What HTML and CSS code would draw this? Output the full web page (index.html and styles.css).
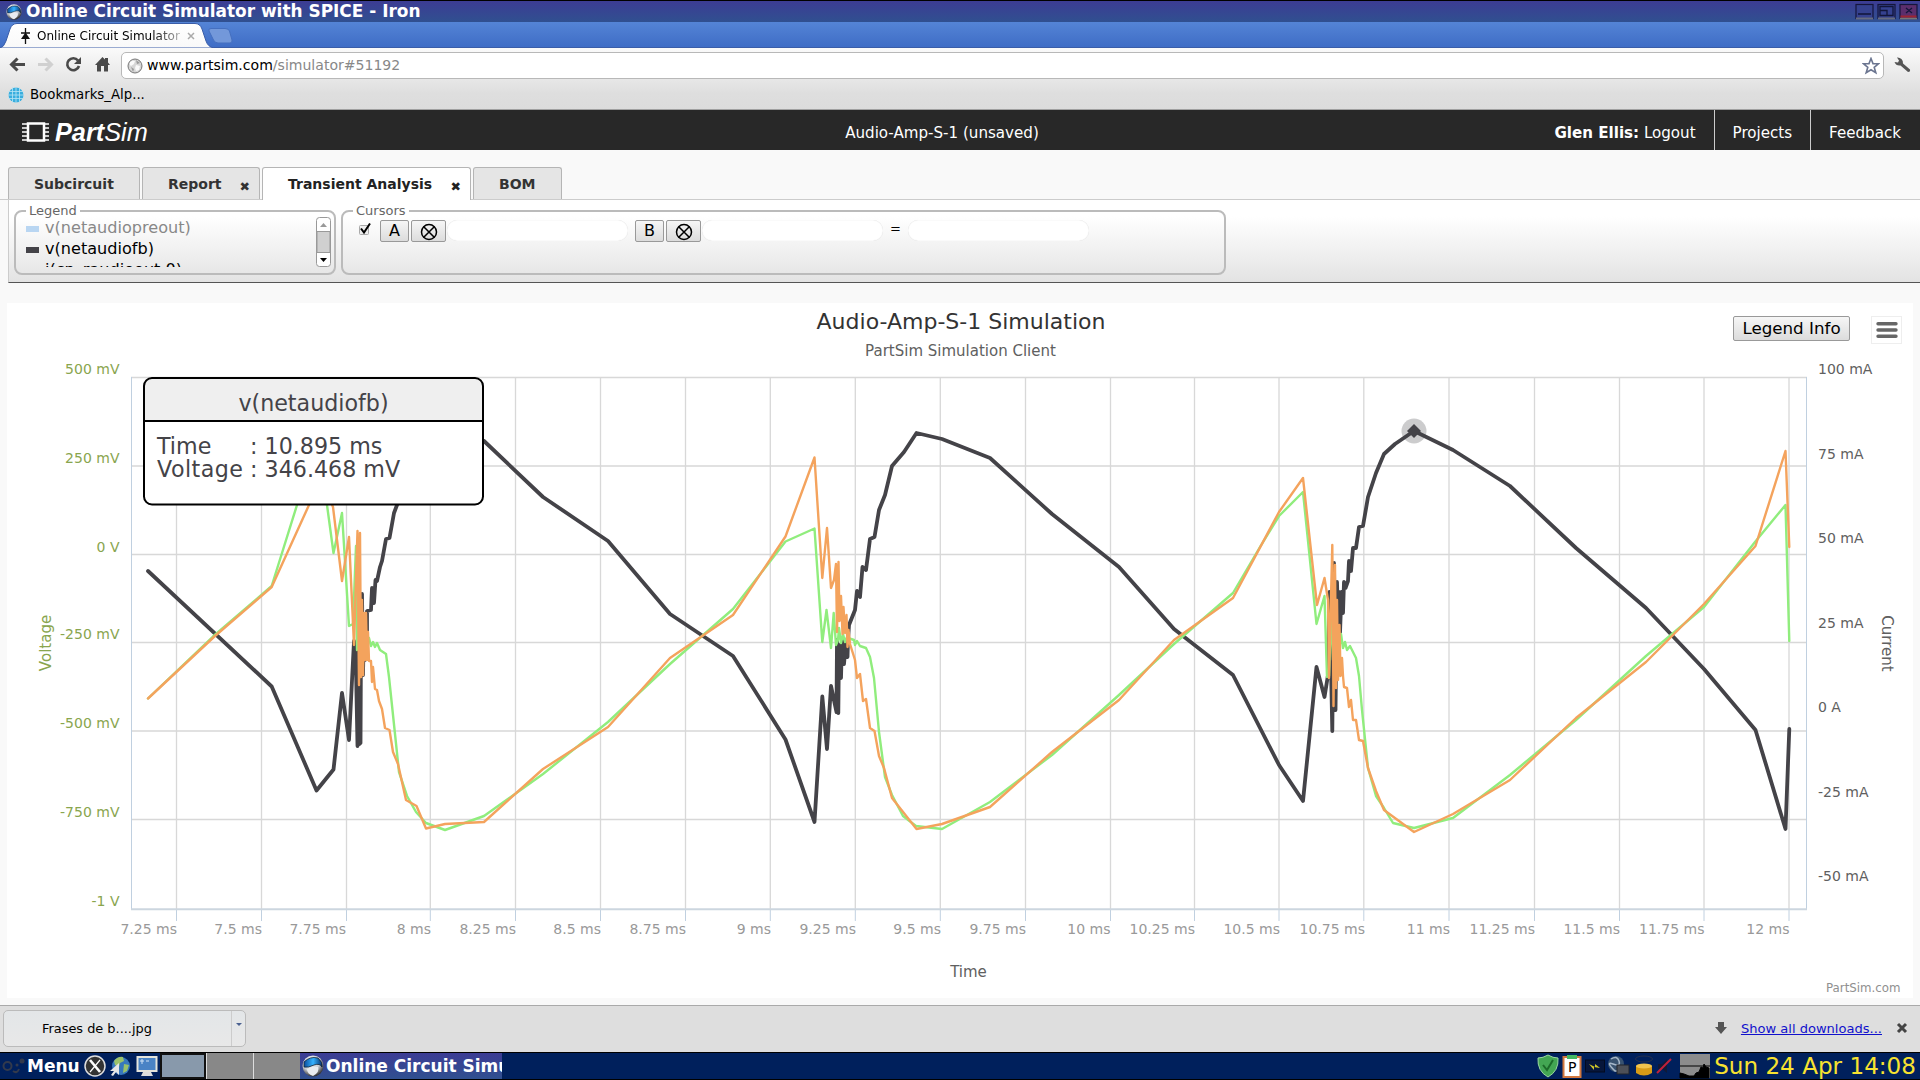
FILE: index.html
```html
<!DOCTYPE html>
<html lang="en">
<head>
    <meta charset="utf-8">
    <title>Online Circuit Simulator with SPICE</title>
    <link rel="stylesheet" href="styles.css">
</head>
<body>
    <svg class="defs" width="0" height="0">
        <defs>
            <radialGradient id="ballShade" cx=".4" cy=".3" r=".7">
                <stop offset="0" stop-color="#fff"/>
                <stop offset=".6" stop-color="#c8ccd2"/>
                <stop offset="1" stop-color="#333"/>
            </radialGradient>
            <linearGradient id="visor" x1="0" y1="0" x2="1" y2="0">
                <stop offset="0" stop-color="#0a4c9c"/>
                <stop offset=".5" stop-color="#35b2ff"/>
                <stop offset="1" stop-color="#06326e"/>
            </linearGradient>
            <symbol id="ironBall" viewBox="0 0 22 22">
                <circle cx="11" cy="11" r="10.5" fill="url(#ballShade)"/>
                <path d="M2 7Q8 1 16 3Q21 7 20 12Q18 8 12 10Q6 13 2 12Z" fill="url(#visor)" stroke="#123" stroke-width=".8"/>
                <path d="M5 14Q9 11 16 12Q18 17 11 21Q5 19 5 14Z" fill="#e9ecf0"/>
            </symbol>
        </defs>
    </svg>

    <!-- Window title -->
    <div class="titlebar">
        <svg class="ball" width="16" height="16"><use href="#ironBall"/></svg>
        <span class="window-title">Online Circuit Simulator with SPICE - Iron</span>
        <svg class="window-buttons" width="64" height="18" viewBox="0 0 64 18">
            <g fill="#35418f" stroke="#15153c" stroke-width="1.2">
                <rect x="1" y="1.5" width="17" height="14"/>
                <rect x="23" y="1.5" width="17" height="14"/>
                <rect x="45" y="1.5" width="17" height="14" fill="#5b2e6c"/>
            </g>
            <path d="M1 15.5h17M23 15.5h17" stroke="#666b80" stroke-width="2"/>
            <path d="M45.5 13.5h16" stroke="#9c2432" stroke-width="2"/>
            <path d="M45 15.6h17" stroke="#777" stroke-width="1.6"/>
            <path d="M3 11h13M25 3.5h13v9H25zM25 7.500h7v5M51 5l6 5M57 5l-6 5" stroke="#11153a" stroke-width="1.3" fill="none"/>
        </svg>
    </div>

    <!-- Browser tab strip -->
    <div class="tabstrip">
        <svg class="tab-shape" width="240" height="26" viewBox="0 0 240 26">
            <defs>
                <linearGradient id="tabFill" x1="0" y1="0" x2="0" y2="1">
                    <stop offset="0" stop-color="#fff"/>
                    <stop offset="1" stop-color="#f9f9f9"/>
                </linearGradient>
            </defs>
            <path d="M0 26Q4 25 6 19L10 7Q12 1.500 17 1.500H195Q200 1.500 202 7L206 19Q208 25 214 26Z" fill="url(#tabFill)" stroke="#3a5da8"/>
            <path d="M213 6.500H225Q228.500 6.500 229.500 9L232 18Q232.500 21 230 21H218Q215 21 213.500 18L209 9Q208 6.500 211 6.500Z" fill="#7398da" stroke="#456fbf"/>
            <path d="M25.500 6V22M21 11h9" stroke="#111" stroke-width="1.300"/>
            <path d="M25.500 10.500l4.500 6.500h-9z" fill="#111"/>
            <path d="M188 11l6 6M194 11l-6 6" stroke="#aaa" stroke-width="1.500"/>
        </svg>
        <span class="browser-tab-title">Online Circuit Simulator</span>
    </div>

    <!-- Navigation toolbar -->
    <div class="toolbar">
        <div class="nav-row">
            <svg width="121" height="28" viewBox="0 0 121 28">
                <path d="M25 14.500H12M17.500 8.500L11.500 14.500L17.500 20.500" fill="none" stroke="#4a4a4a" stroke-width="3"/>
                <path d="M38 14.500H51M45.500 8.500L51.500 14.500L45.500 20.500" fill="none" stroke="#d0d0d0" stroke-width="3"/>
                <path d="M78 10.500A6 6 0 1 0 79 16" fill="none" stroke="#4a4a4a" stroke-width="2.600"/>
                <path d="M81 7v7h-7z" fill="#4a4a4a"/>
                <path d="M95 15L102.500 7L105 9.500V8h3v4.500L110 15h-2v6.500h-4V16h-3v5.500h-4V15z" fill="#4a4a4a"/>
            </svg>
            <div class="address">
                <svg width="16" height="16" viewBox="0 0 16 16">
                    <circle cx="8" cy="8" r="7" fill="#d6d6d6" stroke="#777"/>
                    <path d="M3 4Q6 2 8 3L7 6L4 8L3 7ZM9 7l4 1l-1 4l-3 1l-1-3z" fill="#fafafa"/>
                    <path d="M9 2l4 3l-3 1zM4 9l3 2l-1 3z" fill="#999"/>
                </svg>
                <span class="url">www.partsim.com<span>/simulator#51192</span></span>
                <svg class="star" width="18" height="18" viewBox="0 0 18 18">
                    <path d="M9 1.500l2 5.100l5.500.2l-4.300 3.500l1.600 5.400L9 12.700l-4.800 3l1.600-5.400L1.500 6.800L7 6.600z" fill="#fff" stroke="#6b7590" stroke-width="1.600"/>
                </svg>
            </div>
            <svg width="35" height="28" viewBox="0 0 35 28">
                <path d="M12 7.500A5.500 5.500 0 0 1 18 13.500L25 19.500Q25.500 22 23 22L15.500 15.500A5.500 5.500 0 0 1 9.500 12L13 12.500L14 10.500Z" fill="#555"/>
            </svg>
        </div>
        <div class="bookmarks">
            <svg width="16" height="16" viewBox="0 0 16 16">
                <circle cx="8" cy="8" r="7.500" fill="#39aede"/>
                <path d="M0 4.500h16M0 8h16M0 11.500h16M4.500 0v16M8 0v16M11.500 0v16" stroke="#b9e4f5" stroke-width=".8"/>
            </svg>
            <span>Bookmarks_Alp...</span>
        </div>
    </div>

    <!-- PartSim header -->
    <div class="site-header">
        <div class="logo">
            <svg width="28" height="20" viewBox="0 0 28 20">
                <rect x="6" y="1.500" width="16" height="17" fill="none" stroke="#fff" stroke-width="2.500"/>
                <path d="M0 2h6M0 6h6M0 10h6M0 14h6M0 18h6M22 2h5M22 6h5M22 10h5M22 14h5M22 18h5" stroke="#fff" stroke-width="1.700"/>
            </svg>
            <span class="logo-text"><b>Part</b>Sim</span>
        </div>
        <div class="project-name">Audio-Amp-S-1 (unsaved)</div>
        <div class="links">
            <span><b>Glen Ellis:</b> Logout</span>
            <span>Projects</span>
            <span>Feedback</span>
        </div>
    </div>

    <div class="tabs">
        <div class="tab subcircuit">Subcircuit</div>
        <div class="tab report">Report <i class="close"></i></div>
        <div class="tab analysis active">Transient Analysis <i class="close"></i></div>
        <div class="tab bom">BOM</div>
    </div>

    <div class="controls">
        <fieldset class="legend-box">
            <legend>Legend</legend>
            <div class="series-list">
                <ul>
                    <li class="off"><i></i>v(netaudiopreout)</li>
                    <li><i></i>v(netaudiofb)</li>
                    <li><i class="none"></i>i(cp_raudioout.0)</li>
                </ul>
                <div class="scrollbar">
                    <svg width="15" height="50" viewBox="0 0 15 50">
                        <rect x=".5" y=".5" width="14" height="49" rx="3" fill="#fff" stroke="#999"/>
                        <rect x="1" y="14.500" width="13" height="21" fill="#d0d0d0" stroke="#999"/>
                        <path d="M4 10h7l-3.500-4z" fill="#999"/>
                        <path d="M4 41h7l-3.500 4z" fill="#000"/>
                    </svg>
                </div>
            </div>
        </fieldset>
        <fieldset class="cursors-box">
            <legend>Cursors</legend>
            <div class="cursor-row">
                <svg class="check" width="14" height="14" viewBox="0 0 14 14">
                    <rect x=".500" y="3.500" width="9" height="9" rx="1" fill="#eee" stroke="#aaa"/>
                    <path d="M2 6.500l3 4l6-9" fill="none" stroke="#000" stroke-width="2"/>
                </svg>
                <button class="letter">A</button>
                <button class="clear"><svg width="18" height="18" viewBox="0 0 18 18"><path d="M3.500 3.500l11 11M14.500 3.500l-11 11" stroke="#000" stroke-width="1.500"/><circle cx="9" cy="9" r="7.500" fill="none" stroke="#000" stroke-width="1.500"/></svg></button>
                <div class="field"></div>
                <button class="letter second">B</button>
                <button class="clear"><svg width="18" height="18" viewBox="0 0 18 18"><path d="M3.500 3.500l11 11M14.500 3.500l-11 11" stroke="#000" stroke-width="1.500"/><circle cx="9" cy="9" r="7.500" fill="none" stroke="#000" stroke-width="1.500"/></svg></button>
                <div class="field"></div>
                <span class="equals">=</span>
                <div class="field"></div>
            </div>
        </fieldset>
    </div>

    <div class="chart-panel">
        <svg class="chart" width="1906" height="695" viewBox="7 303 1906 695">
            <!-- grid -->
            <path class="grid" d="M131 377.500H1807M131 466H1807M131 554.500H1807M131 642.500H1807M131 731H1807M131 819.500H1807"/>
            <path class="grid" d="M176.500 377V909M261.500 377V909M346.500 377V909M430.300 377V909M515.500 377V909M600.500 377V909M685.500 377V909M770.300 377V909M855.300 377V909M940.300 377V909M1025.500 377V909M1110.500 377V909M1194.500 377V909M1279 377V909M1363.800 377V909M1449 377V909M1534.500 377V909M1619.500 377V909M1704 377V909M1789 377V909"/>
            <path class="tick" d="M176.500 910v11M261.500 910v11M346.500 910v11M430.300 910v11M515.500 910v11M600.500 910v11M685.500 910v11M770.300 910v11M855.300 910v11M940.300 910v11M1025.500 910v11M1110.500 910v11M1194.500 910v11M1279 910v11M1363.800 910v11M1449 910v11M1534.500 910v11M1619.500 910v11M1704 910v11M1789 910v11"/>
            <path class="tick" d="M131.500 377V909M1806.500 377V909"/>
            <path class="axis" d="M131 909.200H1807"/>

            <!-- v(netaudiofb) -->
            <polyline class="series dark" points="148,571 271.700,686.500 316.500,790.500 333.500,769.500 342,693 349,740 354,641 356,668 357.500,746 358.500,620 359.500,744 360.500,743 361,640 362,594 363,675 364,620 365,660 366,616 367,645 367,611 371,610 372,588 374,603 375.500,580 377,581 380,567 382,561 386,539 389.500,538 394,513 397,505 406,470 426,450 451,436 484,441 543,497 608,541 670,614 733,656 785.500,739.500 814.500,822 822.300,696.500 827,749 831,686 836.500,712 837,640 838.300,713 839,645 841,678 842,640 844,664 846,640 847.500,657 848,640 849,625 855,610 857,591 860,597 862.500,567 866,570 870,539 874.500,537 879,510 885,495 892,466 904,452 916.500,433 942,439 990,458 1052,514 1119,567 1174,629 1233,675 1279,765 1303,801 1316.500,667 1324.500,697 1328,675 1329.500,592 1332.300,731 1334,563 1335.500,710 1337,582 1338,620 1339,592 1340,633 1341.500,592 1343,613 1344,582 1345.500,588 1348,581 1349,561 1351,571 1353,548 1356,548 1359,527 1363,526 1368,497 1376,473 1384,454 1395,444 1414,431 1453,450 1510,486 1576,548 1646,608 1704,669 1755.500,730 1785.500,829 1789.300,729"/>
            <!-- supply currents -->
            <polyline class="series green" points="148,698.500 213,636.500 271.700,586 297,505 312,470 322,480 327,505 333.500,553 342,513 349,626 353,624 356,546 357,650 359,590 361,660 363,620 366,648 369,638 371,646 373,642 375,647 377,643 380,650 386,654 389,677 393,715 399,772 407,796 416,812 426,823 445,830 484,816 543,774 608,722 670,664 733,609 785.500,541.500 814.500,528.500 822.300,642 826.500,610 831,648 833.700,613 836,645 838,640 839,628 841,643 843,634 845,642 847,637 851,639 854,640 855,645 857,641 860,646 866,648 870,657 874,678 879,732 885,777 892,795 903,816 916,826 942,829 990,802 1052,755 1119,695 1174,644 1233,593 1260,547 1279,516 1303,492 1316.500,624 1324.500,596 1327,677 1329,676 1331,610 1333,660 1336,620 1339,650 1341,634 1343,648 1345,642 1347,650 1350,646 1356,658 1359,676 1362,710 1368,768 1376,796 1384,808 1393,823 1414,828 1453,818 1510,775 1576,720 1646,656 1704,607 1755,542 1785.500,505 1789.300,641"/>
            <polyline class="series orange" points="148,698.500 215,636 271.700,587 309,505 322,480 333,507 342,581 349,537 354,645 357.500,531 359,685 360,533 361,677 362,600 363,675 364,613 365,660 366,613 367,660 368,632 369,661 371,661 372,682 373,667 375,689 377,690 379,701 382,709 385,728 389.500,730 393,752 398,764 406,800 416.500,806 426,828.500 445,824 484,822 543,769 608,727 670,658 733,615 785.500,536.500 814.500,457.500 822.300,578 827,528 831,588 834,580 836,564 837,632 838.500,562 839.500,621 841,596 842.500,634 843.500,607 845,633 846.500,615 847.500,647 848.500,630 850,644 855,660 857,678 860,674 863,701 866,699 870,728 874.500,731 879,756 884,768 892,798 916.500,829 942,824 990,807 1052,752 1119,700 1174,640 1233,598 1279,512 1303,478 1317,605 1324.500,578 1328,600 1329,678 1332.300,545 1333.500,706 1335,565 1336,688 1337,600 1338,680 1339.500,625 1340.500,676 1342,658 1343,676 1344,687 1347,688 1349,707 1351,700 1353,720 1356,720 1359,740 1363,741 1368,768 1376,791 1384,810 1414,832 1453,814 1510,780 1576,718 1646,662 1704,604 1755.500,546 1785.500,451 1789.300,547"/>

            <!-- selected point -->
            <circle cx="1414" cy="431" r="12.500" fill="#444348" opacity=".27"/>
            <path d="M1414 424l7 7l-7 7l-7-7z" fill="#444348"/>

            <text class="title" x="961" y="329" text-anchor="middle">Audio-Amp-S-1 Simulation</text>
            <text class="subtitle" x="960.500" y="356" text-anchor="middle">PartSim Simulation Client</text>

            <g class="volt-labels" text-anchor="end">
                <text x="119.500" y="374">500 mV</text>
                <text x="119.500" y="463">250 mV</text>
                <text x="119.500" y="552">0 V</text>
                <text x="119.500" y="639">-250 mV</text>
                <text x="119.500" y="728">-500 mV</text>
                <text x="119.500" y="817">-750 mV</text>
                <text x="119.500" y="906">-1 V</text>
            </g>
            <g class="amp-labels">
                <text x="1818" y="374">100 mA</text>
                <text x="1818" y="459">75 mA</text>
                <text x="1818" y="543">50 mA</text>
                <text x="1818" y="628">25 mA</text>
                <text x="1818" y="712">0 A</text>
                <text x="1818" y="797">-25 mA</text>
                <text x="1818" y="881">-50 mA</text>
            </g>
            <g class="time-labels" text-anchor="end">
                <text x="177" y="934">7.25 ms</text>
                <text x="262" y="934">7.5 ms</text>
                <text x="346" y="934">7.75 ms</text>
                <text x="431" y="934">8 ms</text>
                <text x="516" y="934">8.25 ms</text>
                <text x="601" y="934">8.5 ms</text>
                <text x="686" y="934">8.75 ms</text>
                <text x="771" y="934">9 ms</text>
                <text x="856" y="934">9.25 ms</text>
                <text x="941" y="934">9.5 ms</text>
                <text x="1026" y="934">9.75 ms</text>
                <text x="1110.500" y="934">10 ms</text>
                <text x="1195" y="934">10.25 ms</text>
                <text x="1280" y="934">10.5 ms</text>
                <text x="1365" y="934">10.75 ms</text>
                <text x="1450" y="934">11 ms</text>
                <text x="1535" y="934">11.25 ms</text>
                <text x="1620" y="934">11.5 ms</text>
                <text x="1704.500" y="934">11.75 ms</text>
                <text x="1789.500" y="934">12 ms</text>
            </g>
            <text class="volt-title" transform="translate(50.500 643) rotate(-90)" text-anchor="middle">Voltage</text>
            <text class="axis-title" transform="translate(1882 643.500) rotate(90)" text-anchor="middle">Current</text>
            <text class="axis-title" x="968.500" y="977" text-anchor="middle">Time</text>
            <text class="credits" x="1900.500" y="992" text-anchor="end">PartSim.com</text>

            <!-- tooltip -->
            <rect x="144" y="378" width="339" height="126.500" rx="8" fill="#fff"/>
            <path d="M144 421V386Q144 378 152 378H475Q483 378 483 386V421Z" fill="#efefef"/>
            <rect x="144" y="378" width="339" height="126.500" rx="8" fill="none" stroke="#000" stroke-width="2"/>
            <path d="M144 421H483" stroke="#000" stroke-width="2"/>
            <g class="tip">
                <text x="313.500" y="411" text-anchor="middle">v(netaudiofb)</text>
                <text x="157" y="454">Time</text>
                <text x="250" y="454">: 10.895 ms</text>
                <text x="157" y="477" textLength="86">Voltage</text>
                <text x="250" y="477">: 346.468 mV</text>
            </g>

            <!-- export menu -->
            <rect x="1871.500" y="316.500" width="30" height="27" fill="#fff" stroke="#eee"/>
            <path d="M1878 323.700H1896M1878 330H1896M1878 336.200H1896" stroke="#666" stroke-width="3.400" stroke-linecap="round"/>
        </svg>
        <button class="legend-info">Legend Info</button>
    </div>

    <!-- Downloads -->
    <div class="downloads">
        <div class="download-item">
            <span>Frases de b....jpg</span>
            <i></i>
        </div>
        <div class="download-links">
            <svg width="14" height="14" viewBox="0 0 14 14"><path d="M5 1h6v5h3L8 13L2 6h3z" fill="#555"/></svg>
            <a href="#">Show all downloads...</a>
            <svg width="12" height="12" viewBox="0 0 12 12"><path d="M2 2l8 8M10 2l-8 8" stroke="#444" stroke-width="3"/></svg>
        </div>
    </div>

    <!-- Desktop panel -->
    <div class="taskbar">
        <svg width="26" height="26" viewBox="0 0 26 26">
            <g fill="none" stroke="#333a4c" stroke-width="2"><circle cx="7.500" cy="13" r="4"/><path d="M13 18q4 3 6-2"/></g>
            <circle cx="22" cy="8" r="2.500" fill="#333a4c"/><circle cx="17" cy="12" r="1.500" fill="#333a4c"/>
        </svg>
        <span class="menu">Menu</span>
        <svg class="launchers" width="80" height="26" viewBox="80 0 80 26">
            <circle cx="95" cy="13" r="10" fill="#333" stroke="#ddd" stroke-width="1.500"/>
            <path d="M90 7l10 12" stroke="#fff" stroke-width="2.600"/><path d="M100 7L90 19" stroke="#fff" stroke-width="1.200"/>
            <circle cx="121" cy="13" r="9" fill="#3878bd"/>
            <path d="M114 8q4-5 9-4l1 4l-4 2l-1 4l-4-2zM124 11l5 1l-2 6l-4 2z" fill="#9bc26a"/>
            <path d="M119 10v12l-3-3l-3 4l-2-1l3-4h-4z" fill="#e6e6e6"/>
            <rect x="137.500" y="4" width="19" height="14" fill="#4a83c5" stroke="#e4e4dc" stroke-width="2"/>
            <path d="M140 8h4M142 6v5M146 8h3" stroke="#cfe2f5"/>
            <path d="M143 19h8l2 4h-12z" fill="#ddd"/>
        </svg>
        <div class="pager"><i class="current"></i><i></i><i></i></div>
        <div class="task">
            <svg width="22" height="22"><use href="#ironBall"/></svg>
            <span>Online Circuit Simulator</span>
        </div>
        <svg class="tray" width="180" height="26" viewBox="1533 0 180 26">
            <path d="M1548 2q5 3 10 3q1 13-10 19q-11-6-10-19q5 0 10-3z" fill="#43a653" stroke="#9bd7a0"/>
            <path d="M1543 12l4 5l6-10" fill="none" stroke="#1c6b2a" stroke-width="2"/>
            <rect x="1563.500" y="4" width="17" height="20" fill="#fff" stroke="#d1783f" stroke-width="2"/>
            <rect x="1567" y="2" width="10" height="4" fill="#43b863"/>
            <text class="clip-letter" x="1568" y="19">P</text>
            <rect x="1585.500" y="7" width="19" height="12" fill="#07163b" stroke="#030b20"/>
            <path d="M1589 11l6 3v-3l5 4l-6-1v3z" fill="#d4c927"/>
            <circle cx="1616" cy="11" r="8" fill="#38526f"/>
            <path d="M1611 6q6-4 8 2t-6 3t2 7h8" fill="none" stroke="#a5b6c8" stroke-width="1.500"/>
            <rect x="1617" y="12" width="12" height="9" fill="#4c5058" stroke="#20242c"/>
            <ellipse cx="1644" cy="6" rx="8.500" ry="3" fill="none" stroke="#25304c"/>
            <path d="M1636 13v7q8 5 16 0v-7z" fill="#d89b16"/><ellipse cx="1644" cy="13" rx="8" ry="2.500" fill="#f2c34d"/>
            <path d="M1658 11h4l5-5v14l-5-4h-4z" fill="#101a38"/>
            <path d="M1657 20L1671 6" stroke="#c0203a" stroke-width="2"/>
            <rect x="1680" y="1" width="30" height="24" fill="#8c8c8c"/>
            <path d="M1680 13h30M1680 25v-5l4 1l5 2h5l2-3l3-1l2-5l2 1l1-4l2 3l3 1v10z" fill="#000" stroke="#000"/>
        </svg>
        <span class="clock">Sun 24 Apr 14:08</span>
    </div>
</body>
</html>
```
FILE: styles.css
```css
body {
    margin: 0;
    width: 1920px;
    height: 1080px;
    overflow: hidden;
    display: flex;
    flex-direction: column;
    background: #f9f9f9;
    font-family: "DejaVu Sans", Verdana, sans-serif;
    font-size: 13px;
    color: #000;
}
svg {
    display: block;
    flex: none;
}
.defs {
    position: absolute;
}
body > div {
    flex: none;
    box-sizing: border-box;
}

/* window */
.titlebar {
    height: 22px;
    border-top: 1px solid #000;
    background: linear-gradient(#3c3c94, #305090);
    display: flex;
    align-items: center;
    padding: 0 1px 0 6px;
    color: #fff;
}
.window-title {
    margin: -1px 0 0 4px;
    font-size: 16.95px;
    font-weight: bold;
    white-space: nowrap;
    flex: 1;
}
.tabstrip {
    height: 26px;
    background: linear-gradient(#5484d6, #3e6cc5);
    box-shadow: inset 0 -1px #3a5da8;
    display: flex;
}
.browser-tab-title {
    margin-left: -203px;
    width: 144px;
    line-height: 28px;
    font-size: 12px;
    white-space: nowrap;
    overflow: hidden;
    background: linear-gradient(to right, #000 80%, #bbb);
    background-clip: text;
    -webkit-background-clip: text;
    color: transparent;
}
.toolbar {
    height: 62px;
    background: linear-gradient(#fafafa, #dedede 75%, #dcdcdc);
    border-bottom: 1px solid #a0a0a0;
}
.nav-row {
    display: flex;
    padding-top: 4px;
}
.address {
    flex: 1;
    height: 25px;
    border: 1px solid #b8b8b8;
    border-radius: 5px;
    background: #fff;
    display: flex;
    align-items: center;
    padding: 0 3px 0 5px;
    margin-right: 1px;
}
.url {
    flex: 1;
    margin: -2px 0 0 4px;
    font-size: 14.05px;
}
.url span {
    color: #888;
}
.nav-row > svg {
    margin-top: -2px;
}
.bookmarks {
    display: flex;
    align-items: center;
    gap: 6px;
    padding-left: 8px;
    height: 29px;
    margin-top: 1px;
    font-size: 13.3px;
}

/* header */
.site-header {
    height: 40px;
    background: #282828;
    color: #fff;
    display: grid;
    grid-template-columns: 1fr auto 1fr;
    font-size: 15.1px;
    line-height: 46px;
}
.logo {
    display: flex;
    padding-left: 22px;
}
.logo svg {
    margin-top: 12px;
}
.logo-text {
    font: italic 25.3px/44px "Liberation Sans", Arial, sans-serif;
    margin-left: 5px;
}
.project-name {
    transform: translateX(-18px);
}
.links {
    display: flex;
    justify-content: flex-end;
    white-space: nowrap;
    height: 40px;
    padding-right: 1px;
}
.links span {
    padding: 0 18px;
    border-left: 1px solid #ccc;
}
.links span:first-child {
    border-left: none;
}

/* tabs */
.tabs {
    height: 50px;
    padding: 17px 0 0 8px;
    display: flex;
    gap: 2px;
    border-bottom: 1px solid #ccc;
    font-size: 14px;
    font-weight: bold;
    color: #333;
}
.tab {
    box-sizing: border-box;
    height: 32px;
    border: 1px solid #b5b5b5;
    border-bottom: none;
    border-radius: 3px 3px 0 0;
    background: #e5e5e5;
    padding-left: 25px;
    line-height: 33px;
    display: flex;
    justify-content: space-between;
    white-space: nowrap;
}
.subcircuit { width: 132px; }
.report { width: 118px; }
.analysis { width: 209px; }
.bom { width: 89px; }
.tab.active {
    height: 34px;
    background: #fff;
    color: #222;
}
.close::before {
    content: "✖";
    font: 12.5px/37px "DejaVu Sans", sans-serif;
    margin-right: 9px;
}

/* legend and cursors */
.controls {
    height: 83px;
    margin-left: 8px;
    border-left: 1px solid #ccc;
    border-bottom: 1px solid #555;
    background: linear-gradient(#fff 20%, #e3e3e3);
    padding: 4px 0 0 5px;
    display: flex;
    gap: 5px;
}
fieldset {
    margin: 0;
    padding: 0;
    min-width: 0;
    height: 71px;
    box-sizing: border-box;
    border: 2px solid #bbb;
    border-radius: 8px;
}
legend {
    margin-left: 10px;
    padding: 0 3px;
    font-size: 13px;
    line-height: 14px;
    color: #666;
}
.legend-box { width: 322px; }
.cursors-box { width: 885px; }
.series-list {
    display: flex;
    justify-content: space-between;
    margin-top: -1px;
    padding: 0 3px 0 10px;
}
ul {
    list-style: none;
    margin: 0;
    padding: 0;
    height: 50px;
    overflow: hidden;
    font-size: 16.1px;
}
li {
    line-height: 21px;
    display: flex;
    align-items: center;
}
li i {
    width: 13px;
    height: 6px;
    margin: 3px 6px 0 0;
    background: #444348;
}
li i.none {
    background: none;
}
li.off {
    color: #888;
}
li.off i {
    background: #b9d6f2;
}
.cursor-row {
    display: flex;
    padding: 2px 0 0 16px;
}
.check {
    margin-top: 2px;
}
button {
    box-sizing: border-box;
    border: 1px solid #999;
    border-radius: 2px;
    background: linear-gradient(#f6f6f6, #dcdcdc);
    padding: 0;
    font-family: "DejaVu Sans", sans-serif;
    font-size: 16px;
    color: #000;
    flex: none;
}
.letter {
    width: 29px;
    height: 22px;
    line-height: 20px;
    margin-left: 7px;
}
.letter.second {
    margin-left: 7px;
}
.clear {
    width: 35px;
    height: 22px;
    margin: 0 1px 0 2px;
    display: flex;
    align-items: center;
    justify-content: center;
    padding-top: 2px;
}
.field {
    width: 181px;
    height: 21px;
    border-radius: 10px;
    background: #fff;
    box-shadow: inset 0 0 1px #ccc;
}
.equals {
    margin: 0 7px 0 7px;
    line-height: 18px;
}

/* chart */
.chart-panel {
    position: relative;
    width: 1906px;
    height: 695px;
    margin: 20px 0 0 7px;
    background: #fff;
}
.legend-info {
    position: absolute;
    left: 1726px;
    top: 13px;
    width: 117px;
    height: 25px;
    font-size: 16.7px;
    line-height: 20px;
    padding-bottom: 2px;
}
.grid {
    stroke: #d8d8d8;
    stroke-width: 1.3;
}
.tick {
    stroke: #c0d0e0;
}
.axis {
    stroke: #ccd6df;
    stroke-width: 2;
}
.series {
    fill: none;
    stroke-width: 2.4;
    stroke-linejoin: round;
    stroke-linecap: round;
}
.dark {
    stroke: #444348;
    stroke-width: 3.8;
}
.green { stroke: #90ed7d; }
.orange { stroke: #f4a35d; }
.title {
    font-size: 22px;
    fill: #333;
}
.subtitle, .axis-title {
    font-size: 15px;
    fill: #606060;
}
.volt-title {
    font-size: 15px;
    fill: #89a54e;
}
.volt-labels, .amp-labels, .time-labels {
    font-size: 14px;
    fill: #606060;
}
.volt-labels { fill: #89a54e; }
.time-labels { fill: #999; }
.credits {
    font-size: 11.8px;
    fill: #909090;
}
.tip {
    font-size: 22.2px;
    fill: #444348;
}

/* downloads */
.downloads {
    height: 47px;
    margin-top: 7px;
    border-top: 1px solid #aaa;
    background: #dedede;
    display: flex;
    justify-content: space-between;
    padding: 4px 12px 0 3px;
}
.download-item {
    box-sizing: border-box;
    width: 243px;
    height: 37px;
    border: 1px solid #bbb;
    border-radius: 5px;
    background: linear-gradient(#e3e6e8, #e8e8e8);
    line-height: 35px;
    padding-left: 38px;
    display: flex;
    justify-content: space-between;
    font-size: 12.9px;
}
.download-item i {
    width: 13px;
    border-left: 1px solid #ccc;
}
.download-item i::after {
    content: "";
    display: block;
    margin: 12px 0 0 4px;
    width: 0;
    border: 3px solid transparent;
    border-top-color: #4a6090;
}
.download-links {
    display: flex;
    align-items: center;
    gap: 14px;
    height: 36px;
}
.download-links a {
    color: #1111cc;
    font-size: 13.05px;
}

/* desktop panel */
.taskbar {
    height: 28px;
    border: solid #000;
    border-width: 1px 0;
    background: #00205c;
    display: flex;
    align-items: center;
    color: #fff;
}
.menu {
    font-size: 17px;
    font-weight: bold;
    margin-left: 1px;
    width: 53px;
}
.pager {
    display: flex;
    height: 26px;
    gap: 1px;
    background: #ddd;
}
.pager i {
    width: 46px;
    background: #888;
}
.pager .current {
    box-sizing: border-box;
    border: 2px solid #111;
    background: #8899ab;
}
.task {
    box-sizing: border-box;
    width: 202px;
    height: 26px;
    padding-left: 2px;
    background: linear-gradient(#3c3c94, #305090);
    display: flex;
    align-items: center;
    gap: 2px;
    font-size: 17px;
    font-weight: bold;
    white-space: nowrap;
    overflow: hidden;
}
.tray {
    margin-left: auto;
    margin-right: 1px;
}
.clip-letter {
    font: 14px "DejaVu Sans", sans-serif;
}
.clock {
    font-size: 23.1px;
    line-height: 26px;
    color: #f8e230;
    margin-right: 4px;
    white-space: nowrap;
}
```
